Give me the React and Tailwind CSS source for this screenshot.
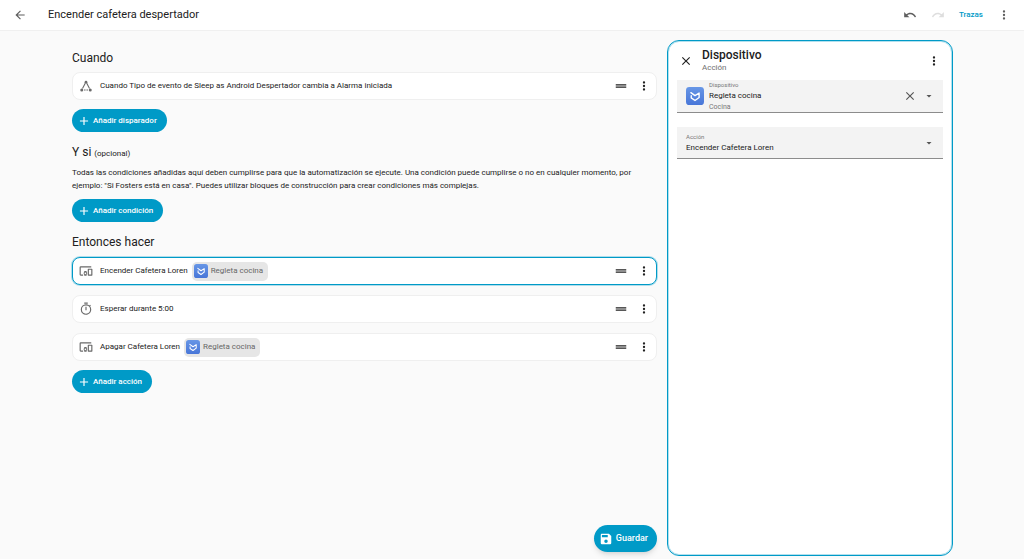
import React from 'react';

const ICONS = {
  back: 'M20 11V13H8L13.5 18.5L12.08 19.92L4.16 12L12.08 4.08L13.5 5.5L8 11H20Z',
  undo: 'M12.5 8C9.85 8 7.45 9 5.6 10.6L2 7V16H11L7.38 12.38C8.77 11.22 10.54 10.5 12.5 10.5C16.04 10.5 19.05 12.81 20.1 16L22.47 15.22C21.08 11.03 17.15 8 12.5 8Z',
  redo: 'M18.4 10.6C16.55 9 14.15 8 11.5 8C6.85 8 2.92 11.03 1.54 15.22L3.9 16C4.95 12.81 7.95 10.5 11.5 10.5C13.45 10.5 15.23 11.22 16.62 12.38L13 16H22V7L18.4 10.6Z',
  dots: 'M12 16A2 2 0 1 1 12 20A2 2 0 1 1 12 16M12 10A2 2 0 1 1 12 14A2 2 0 1 1 12 10M12 4A2 2 0 1 1 12 8A2 2 0 1 1 12 4Z',
  drag: 'M21 11H3V9H21V11M21 13H3V15H21V13Z',
  plus: 'M19 13H13V19H11V13H5V11H11V5H13V11H19V13Z',
  close: 'M19 6.41L17.59 5L12 10.59L6.41 5L5 6.41L10.59 12L5 17.59L6.41 19L12 13.41L17.59 19L19 17.59L13.41 12L19 6.41Z',
  menuDown: 'M7 10L12 15L17 10H7Z',
  save: 'M15 9H5V5H15M12 19A3 3 0 0 1 9 16A3 3 0 0 1 12 13A3 3 0 0 1 15 16A3 3 0 0 1 12 19M17 3H5C3.89 3 3 3.9 3 5V19A2 2 0 0 0 5 21H19A2 2 0 0 0 21 19V7L17 3Z',
  devices:
    'M3 6H21V4H3A2 2 0 0 0 1 6V18A2 2 0 0 0 3 20H7V18H3V6M13 12H9V13.78A3 3 0 0 0 8 16A3 3 0 0 0 9 18.22V20H13V18.22C13.61 17.67 14 16.88 14 16S13.61 14.33 13 13.78V12M11 17.5A1.5 1.5 0 1 1 12.5 16A1.5 1.5 0 0 1 11 17.5M22 8H16A1 1 0 0 0 15 9V19A1 1 0 0 0 16 20H22A1 1 0 0 0 23 19V9A1 1 0 0 0 22 8M21 18H17V10H21V18Z',
  timer:
    'M12 20A7 7 0 0 1 5 13A7 7 0 0 1 12 6A7 7 0 0 1 19 13A7 7 0 0 1 12 20M19.03 7.39L20.45 5.97C20 5.46 19.55 5 19.04 4.56L17.62 6C16.07 4.74 14.12 4 12 4A9 9 0 0 0 3 13A9 9 0 0 0 12 22C17 22 21 17.97 21 13C21 10.88 20.26 8.93 19.03 7.39M11 14H13V8H11M15 1H9V3H15V1Z',
};

const ACTIONS = [
  { icon: 'devices', text: 'Encender Cafetera Loren', device: 'Regleta cocina', selected: true },
  { icon: 'timer', text: 'Esperar durante 5:00' },
  { icon: 'devices', text: 'Apagar Cafetera Loren', device: 'Regleta cocina' },
];

function Icon({ name, className }) {
  return (
    <svg viewBox="0 0 24 24" fill="currentColor" className={className} aria-hidden="true">
      <path d={ICONS[name]} />
    </svg>
  );
}

function StateIcon({ className }) {
  return (
    <svg viewBox="0 0 24 24" fill="currentColor" stroke="currentColor" className={className} aria-hidden="true">
      <path d="M10.5 6.5L5 17M13.5 6.5L19 17" fill="none" strokeWidth="2.2" />
      <path d="M8 20H16" fill="none" strokeWidth="2.2" strokeDasharray="3.2 1.6" />
      <circle cx="12" cy="4.5" r="2.8" stroke="none" />
      <circle cx="3.5" cy="20" r="3" stroke="none" />
      <circle cx="20.5" cy="20" r="3" stroke="none" />
    </svg>
  );
}

function BrandIcon({ className }) {
  return (
    <svg viewBox="0 0 24 24" className={className} aria-hidden="true">
      <defs>
        <linearGradient id="brand" x1="0" y1="0" x2="0" y2="1">
          <stop offset="0" stopColor="#6796e6" />
          <stop offset="1" stopColor="#4876d8" />
        </linearGradient>
      </defs>
      <rect width="24" height="24" rx="4.5" fill="url(#brand)" />
      <path d="M6.5 7.5L12 11.5L17.5 8V14L12 18L7 14.5V11.5" fill="none" stroke="white" strokeWidth="1.8" strokeLinejoin="round" strokeLinecap="round" />
    </svg>
  );
}

function IconButton({ name, label, className }) {
  return (
    <button type="button" aria-label={label} className={`flex items-center justify-center ${className || ''}`}>
      <Icon name={name} className="size-[14px]" />
    </button>
  );
}

function AddButton({ children }) {
  return (
    <button type="button" className="flex h-[23px] items-center gap-0.5 rounded-full bg-[#009ac7] pr-[10px] pl-[5px] text-[8px] font-medium text-white">
      <Icon name="plus" className="size-[14px]" />
      {children}
    </button>
  );
}

function Row({ icon, text, device, selected }) {
  return (
    <div
      className={`flex h-7 items-center rounded-lg border bg-white pr-[5px] pl-1.5 ${
        selected ? 'border-[#009ac7] ring-1 ring-[#009ac7]/30' : 'border-[#efefef]'
      }`}
    >
      {icon === 'state' ? (
        <StateIcon className="size-[14px] shrink-0 p-px text-[#6a6a6a]" />
      ) : (
        <Icon name={icon} className="size-[14px] shrink-0 text-[#6a6a6a]" />
      )}
      <span className="ml-[7px] text-[8px]">{text}</span>
      {device && (
        <span className="ml-1 flex h-[19px] items-center gap-[3px] rounded-[5px] bg-[#e6e6e6] pr-[5px] pl-0.5 text-[8px] text-[#666]">
          <BrandIcon className="size-[14px]" />
          {device}
        </span>
      )}
      <div className="ml-auto flex items-center gap-[9px] text-[#212121]">
        <IconButton name="drag" label="Mover" />
        <IconButton name="dots" label="Más opciones" />
      </div>
    </div>
  );
}

function Heading({ children }) {
  return <h2 className="text-[12px] leading-4">{children}</h2>;
}

function DevicePanel() {
  return (
    <aside className="flex w-[286px] shrink-0 flex-col gap-[14px] rounded-xl border border-[#009ac7] bg-white px-[9px] pt-[7px] ring-1 ring-[#009ac7]/30 ring-inset">
      <div className="flex flex-col gap-1.5">
        <div className="flex h-[26px] items-center">
          <IconButton name="close" label="Cerrar" className="ml-0.5" />
          <div className="ml-[9px]">
            <h2 className="text-[12px] leading-[14px] font-medium">Dispositivo</h2>
            <p className="text-[8px] leading-3 text-[#6f6f6f]">Acción</p>
          </div>
          <IconButton name="dots" label="Más opciones" className="mr-0.5 ml-auto" />
        </div>

        <div className="flex h-[33px] items-center border-b border-[#8c8c8c] bg-[#f3f3f3] px-[9px]">
          <BrandIcon className="size-[18px] shrink-0" />
          <div className="ml-[5px] flex min-w-0 flex-1 flex-col">
            <label htmlFor="device" className="text-[6px] leading-2 text-[#777]">
              Dispositivo
            </label>
            <select id="device" className="h-[14px] appearance-none bg-transparent text-[8px] leading-[14px] outline-none">
              <option>Regleta cocina</option>
            </select>
            <span className="text-[7px] leading-[9px] text-[#777]">Cocina</span>
          </div>
          <IconButton name="close" label="Borrar" className="mr-1.5 text-[#555]" />
          <Icon name="menuDown" className="-mr-px size-3 text-[#555]" />
        </div>
      </div>

      <div className="flex h-8 items-center border-b border-[#8c8c8c] bg-[#f3f3f3] px-[9px]">
        <div className="flex min-w-0 flex-1 flex-col pt-0.5">
          <label htmlFor="action" className="text-[6px] leading-2 text-[#777]">
            Acción
          </label>
          <select id="action" className="h-[14px] appearance-none bg-transparent text-[8px] leading-[14px] outline-none">
            <option>Encender Cafetera Loren</option>
          </select>
        </div>
        <Icon name="menuDown" className="-mr-px size-3 text-[#555]" />
      </div>
    </aside>
  );
}

export default function App() {
  return (
    <div className="flex min-h-screen flex-col bg-[#fafafa] font-[Roboto,sans-serif] text-[#212121]">
      <header className="flex h-[31px] shrink-0 items-center border-b border-[#f0f0f0] bg-white px-[13px] text-[#5f5f5f]">
        <IconButton name="back" label="Volver" />
        <h1 className="ml-[21px] text-[11px] text-[#212121]">Encender cafetera despertador</h1>
        <div className="ml-auto flex items-center gap-[14px]">
          <IconButton name="undo" label="Deshacer" />
          <IconButton name="redo" label="Rehacer" className="text-[#dedede]" />
          <a href="#trazas" className="text-[8px] font-medium text-[#009ac7]">
            Trazas
          </a>
          <IconButton name="dots" label="Más opciones" />
        </div>
      </header>

      <main className="flex flex-1 gap-[10px] pt-[9px] pr-[71px] pb-[3px] pl-[72px]">
        <div className="flex min-w-0 flex-1 flex-col pt-[10px]">
          <section>
            <Heading>Cuando</Heading>
            <div className="mt-1.5">
              <Row icon="state" text="Cuando Tipo de evento de Sleep as Android Despertador cambia a Alarma iniciada" />
            </div>
            <div className="mt-[9px] flex">
              <AddButton>Añadir disparador</AddButton>
            </div>
          </section>

          <section className="mt-3">
            <Heading>
              Y si <span className="text-[8px]">(opcional)</span>
            </Heading>
            <p className="mt-1 text-[8px] leading-[13px]">
              Todas las condiciones añadidas aquí deben cumplirse para que la automatización se ejecute. Una condición
              puede cumplirse o no en cualquier momento, por ejemplo: "Si Fosters está en casa". Puedes utilizar bloques
              de construcción para crear condiciones más complejas.
            </p>
            <div className="mt-[7px] flex">
              <AddButton>Añadir condición</AddButton>
            </div>
          </section>

          <section className="mt-3">
            <Heading>Entonces hacer</Heading>
            <div className="mt-[7px] flex flex-col gap-[10px]">
              {ACTIONS.map((action) => (
                <Row key={action.text} {...action} />
              ))}
            </div>
            <div className="mt-[9px] flex">
              <AddButton>Añadir acción</AddButton>
            </div>
          </section>

          <button
            type="button"
            className="mt-auto mb-1 flex h-[27px] items-center gap-[3px] self-end rounded-full bg-[#009ac7] pr-[9px] pl-[5px] text-[9px] font-medium text-white shadow-md"
          >
            <Icon name="save" className="size-[14px]" />
            Guardar
          </button>
        </div>

        <DevicePanel />
      </main>
    </div>
  );
}
